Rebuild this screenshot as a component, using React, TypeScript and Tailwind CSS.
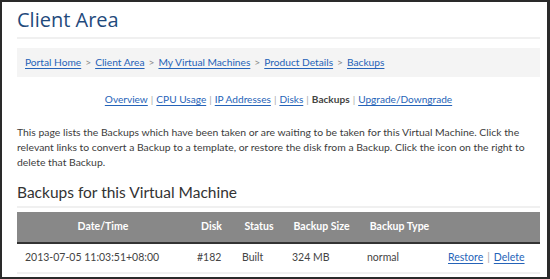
import React from "react";

const link = "text-[#2563b8] underline underline-offset-[2px]";

export default function App() {
  const crumbs = ["Portal Home", "Client Area", "My Virtual Machines", "Product Details", "Backups"];
  const tabs = ["Overview", "CPU Usage", "IP Addresses", "Disks", "Backups", "Upgrade/Downgrade"];
  return (
    <div
      className="w-[550px] h-[279px] overflow-hidden bg-white border-2 border-r-[3px] border-[#2a2a2a] pl-[15px] pr-[7px] pt-[5px] text-[#444]"
      style={{ fontFamily: 'Lato, "Open Sans", sans-serif' }}
    >
      <div className="pb-[4px] border-b-2 border-[#f0f0f0]">
        <h1 className="text-[20px] leading-[26px] text-[#1f4a7c]" style={{ fontFamily: '"Open Sans", sans-serif' }}>
          Client Area
        </h1>
      </div>
      <div className="mt-[9px] h-[29px] bg-[#f4f4f4] flex items-center pl-[8px] text-[10.2px] text-[#888]">
        {crumbs.map((c, i) => (
          <React.Fragment key={c}>
            {i > 0 && <span className="mx-[4px]">&gt;</span>}
            <span className={link}>{c}</span>
          </React.Fragment>
        ))}
      </div>
      <div className="mt-[15px] flex justify-center text-[10.1px] leading-[15px] text-[#aaa]">
        {tabs.map((t, i) => (
          <React.Fragment key={t}>
            {i > 0 && <span className="mx-[3px]">|</span>}
            {t === "Backups" ? (
              <span className="font-bold text-[#444]">{t}</span>
            ) : (
              <span className={link}>{t}</span>
            )}
          </React.Fragment>
        ))}
      </div>
      <p className="mt-[18px] text-[10.4px] leading-[15px] text-[#3c3c3c]">
        This page lists the Backups which have been taken or are waiting to be taken for this Virtual Machine. Click the
        relevant links to convert a Backup to a template, or restore the disk from a Backup. Click the icon on the right
        to delete that Backup.
      </p>
      <div className="mt-[11px] pb-[3px] border-b-2 border-[#f0f0f0]">
        <h2 className="text-[15.5px] leading-[22px] text-[#333]">Backups for this Virtual Machine</h2>
      </div>
      <div className="mt-[4px] text-[10.5px]">
        <div className="grid grid-cols-[172px_45px_50px_75px_81px_100px] h-[32px] items-center bg-[#888] border-b-2 border-[#333] text-white font-bold text-center">
          <div>Date/Time</div>
          <div>Disk</div>
          <div>Status</div>
          <div>Backup Size</div>
          <div>Backup Type</div>
          <div></div>
        </div>
        <div className="grid grid-cols-[172px_45px_50px_75px_81px_100px] h-[30px] items-center border-b-2 border-[#f0f0f0] text-[#444]">
          <div className="pl-[8px]">2013-07-05 11:03:51+08:00</div>
          <div className="pl-[8px]">#182</div>
          <div className="pl-[8px]">Built</div>
          <div className="pl-[8px]">324 MB</div>
          <div className="pl-[8px]">normal</div>
          <div className="pl-[8px] text-[#aaa]">
            <span className={link}>Restore</span>
            <span className="mx-[4px]">|</span>
            <span className={link}>Delete</span>
          </div>
        </div>
      </div>
    </div>
  );
}
